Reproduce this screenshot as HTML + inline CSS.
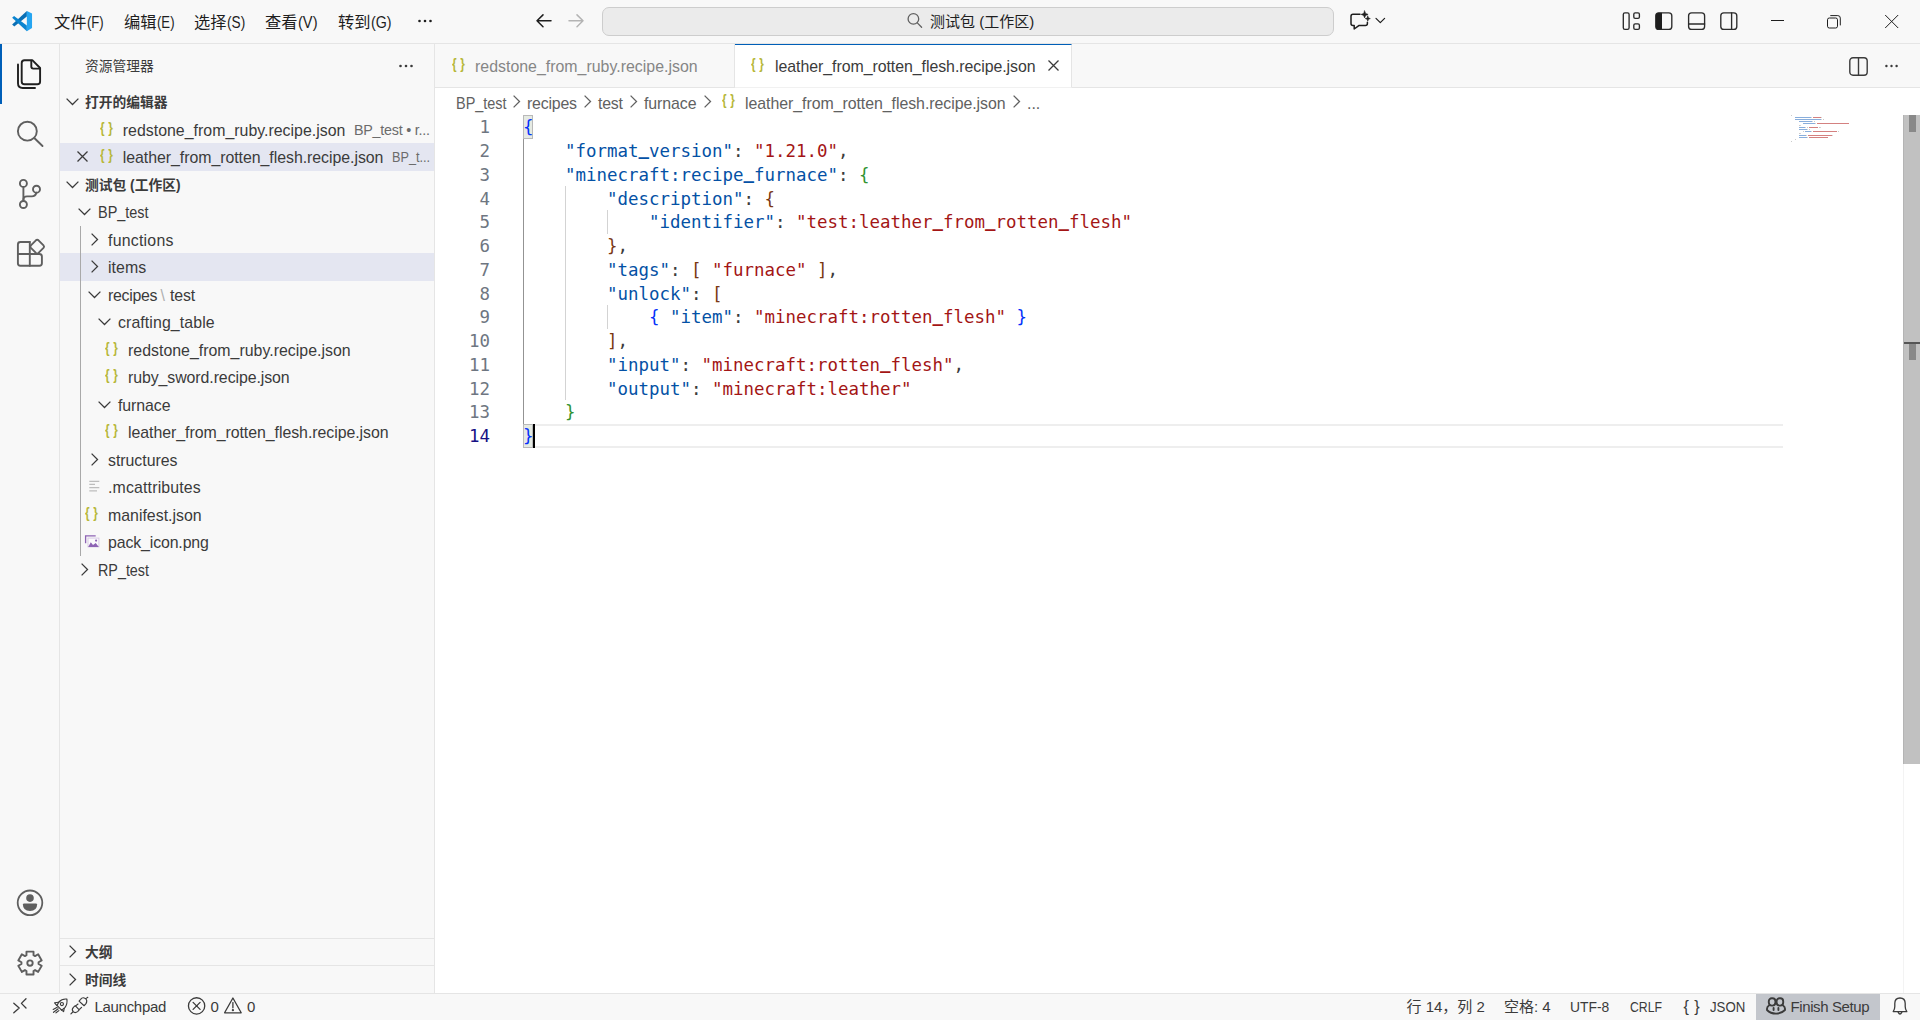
<!DOCTYPE html>
<html lang="zh-CN"><head>
<meta charset="utf-8">
<title>leather_from_rotten_flesh.recipe.json - 测试包 (工作区)</title>
<style>
*{box-sizing:border-box;margin:0;padding:0}
html,body{width:1920px;height:1020px;overflow:hidden;background:#f8f8f8}
body{position:relative;font-family:"Liberation Sans","Noto Sans CJK SC",sans-serif;font-size:16px;color:#3b3b3b;-webkit-font-smoothing:antialiased}
.abs{position:absolute}
svg{position:absolute;overflow:visible}
.t{position:absolute;white-space:nowrap;line-height:1}
/* title bar */
#titlebar{position:absolute;left:0;top:0;width:1920px;height:44px;background:#f8f8f8;border-bottom:1px solid #e5e5e5}
.menu{position:absolute;top:0.5px;height:43px;line-height:43px;font-size:16.25px;color:#1e1e1e;white-space:nowrap}
.ml{font-size:16.6px}
#cc{position:absolute;left:602px;top:7px;width:732px;height:29px;border:1px solid #cdcdcd;border-radius:7px;background:#ebebeb}
/* activity bar */
#activity{position:absolute;left:0;top:44px;width:60px;height:950px;background:#f8f8f8;border-right:1px solid #e5e5e5}
/* sidebar */
#sidebar{position:absolute;left:60px;top:44px;width:375px;height:950px;background:#f8f8f8;border-right:1px solid #e5e5e5}
.row{position:absolute;left:0;width:374px;height:27.5px}
.row.sel{background:#e4e6f1;margin-top:0.3px}
.lbl{position:absolute;white-space:nowrap;font-size:15.9px;line-height:27.5px;top:0;margin-top:1.7px;color:#3b3b3b}
.hdr{font-weight:bold;font-size:13.75px;color:#3b3b3b;margin-top:0.9px}
.desc{font-size:14.3px;color:#6b6b6b}
.jsi{position:absolute;font-family:"Liberation Sans",sans-serif;font-weight:bold;font-size:14.8px;line-height:27.5px;height:27.5px;color:#b7b73b;letter-spacing:4.4px;white-space:nowrap;transform:scaleX(0.8);transform-origin:0 50%;margin:-0.7px 0 0 -0.7px}
.bs{color:#b0b0b0;margin:0 3px}
/* editor */
#editor{position:absolute;left:435px;top:44px;width:1485px;height:950px;background:#fff}
#tabs{position:absolute;left:0;top:0;width:1485px;height:44px;background:#f8f8f8;border-bottom:1px solid #e5e5e5}
.tab{position:absolute;top:0;height:44px;border-right:1px solid #e5e5e5}
#bc{position:absolute;left:0;top:44px;width:1468px;height:27px;background:#fff}
.bcl{color:#616161;top:0}
.bcs{top:7.3px;margin-left:-0.6px;width:7.5px;height:13px}
.bcs path{fill:none;stroke:#616161;stroke-width:1.3}
.code{margin-top:1.3px;position:absolute;left:88px;white-space:pre;font-family:"DejaVu Sans Mono","Liberation Mono",monospace;font-size:17.44px;line-height:23.7px;height:23.7px;color:#3b3b3b}
.ln{margin-top:1.3px;position:absolute;left:0;width:55px;text-align:right;font-family:"DejaVu Sans Mono","Liberation Mono",monospace;font-size:17.44px;line-height:23.7px;height:23.7px;color:#6e7681}
.u{position:relative;top:-1.9px;font-weight:bold}
.k{color:#0451a5}.s{color:#a31515}.b1{color:#0431fa}.b2{color:#319331}.b3{color:#7b3814}
.ln.cur{color:#171184}
#mm i{position:absolute;height:1px;display:block}
/* status bar */
#status{position:absolute;left:0;top:993px;width:1920px;height:27px;background:#f8f8f8;border-top:1px solid #e5e5e5;font-size:15px;color:#3b3b3b}
.st{position:absolute;top:0;line-height:26px;white-space:nowrap}
</style>
</head>
<body>

<!-- ================= TITLE BAR ================= -->
<div id="titlebar">
  <svg style="left:11.9px;top:10.9px" width="20.1" height="20.2" viewBox="0 0 100 101">
    <path d="M74 0 L74 27 L11 77 L0.5 67.5 Z" fill="#0a6fb5"></path>
    <path d="M10 25 L74 72 L74 101 L0.5 33.5 Z" fill="#0a84d0"></path>
    <path d="M74 0 L100 12.5 V85.5 L74 101 Z" fill="#25a5f1"></path>
  </svg>
  <div class="menu" style="left:54px">文件<span class="ml" style="display: inline-block; transform: scaleX(0.79); transform-origin: 0px 50%; margin-right: -4.45px;">(F)</span></div>
  <div class="menu" style="left:124px">编辑<span class="ml" style="display: inline-block; transform: scaleX(0.791); transform-origin: 0px 50%; margin-right: -4.63px;">(E)</span></div>
  <div class="menu" style="left:194px">选择<span class="ml" style="display: inline-block; transform: scaleX(0.8226); transform-origin: 0px 50%; margin-right: -3.93px;">(S)</span></div>
  <div class="menu" style="left:265px">查看<span class="ml" style="display: inline-block; transform: scaleX(0.8814); transform-origin: 0px 50%; margin-right: -2.63px;">(V)</span></div>
  <div class="menu" style="left:338px">转到<span class="ml" style="display: inline-block; transform: scaleX(0.8553); transform-origin: 0px 50%; margin-right: -3.47px;">(G)</span></div>
  <svg style="left:418.3px;top:18.6px" width="14" height="4" viewBox="0 0 14 4"><circle cx="1.5" cy="2" r="1.3" fill="#1e1e1e"></circle><circle cx="7" cy="2" r="1.3" fill="#1e1e1e"></circle><circle cx="12.5" cy="2" r="1.3" fill="#1e1e1e"></circle></svg>
  <div id="cc"></div>
  <svg style="left:0;top:0" width="1920" height="43" viewBox="0 0 1920 43" fill="none" stroke-linecap="round" stroke-linejoin="round">
    <!-- nav arrows -->
    <g stroke="#1e1e1e" stroke-width="1.5"><path d="M551 20.8 H537 M543 14.9 L537 20.8 L543 26.8"></path></g>
    <g stroke="#b4b4b4" stroke-width="1.5"><path d="M569 20.8 H583 M577 14.9 L583 20.8 L577 26.8"></path></g>
    <!-- search icon in command center -->
    <g stroke="#616161" stroke-width="1.3"><circle cx="913.4" cy="18.9" r="5.3"></circle><path d="M917.3 22.9 L921.6 27.2"></path></g>
    <!-- chat sparkle -->
    <g stroke="#1e1e1e" stroke-width="1.5"><path d="M1360 14.2 H1353 Q1351 14.2 1351 16.2 V23.6 Q1351 25.6 1353 25.6 H1354.2 V29 L1358.8 25.6 H1365.4 Q1367.4 25.6 1367.4 23.6 V22.3"></path></g>
    <path d="M1364.6 10.9 L1365.6 13.4 L1368.1 14.4 L1365.6 15.4 L1364.6 17.9 L1363.6 15.4 L1361.1 14.4 L1363.6 13.4Z M1367.8 16.1 L1368.5 17.9 L1370.3 18.6 L1368.5 19.3 L1367.8 21.1 L1367.1 19.3 L1365.3 18.6 L1367.1 17.9Z" fill="#1e1e1e" stroke="#1e1e1e" stroke-width="0.6"></path>
    <g stroke="#1e1e1e" stroke-width="1.2"><path d="M1376 18.4 L1380.3 22.6 L1384.6 18.4"></path></g>
    <!-- layout controls -->
    <g stroke="#2b2b2b" stroke-width="1.35">
      <rect x="1623.3" y="12.8" width="5.8" height="16.6" rx="1.6"></rect>
      <rect x="1633.8" y="12.8" width="5.6" height="5.6" rx="1.4"></rect>
      <rect x="1633.8" y="23.8" width="5.6" height="5.6" rx="1.4"></rect>
      <rect x="1655.8" y="12.8" width="16" height="16.6" rx="3"></rect>
      <rect x="1688.6" y="12.8" width="16" height="16.6" rx="3"></rect>
      <path d="M1688.6 24 H1704.6"></path>
      <rect x="1720.8" y="12.8" width="16" height="16.6" rx="3"></rect>
      <path d="M1731.6 12.8 V29.4"></path>
    </g>
    <path d="M1658.8 12.8 H1662 V29.4 H1658.8 Q1655.8 29.4 1655.8 26.4 V15.8 Q1655.8 12.8 1658.8 12.8Z" fill="#1e1e1e"></path>
    <!-- window controls -->
    <g stroke="#1e1e1e" stroke-width="1.0" stroke-linecap="butt">
      <path d="M1771 20.5 H1784"></path>
      <rect x="1827.5" y="18" width="10" height="10" rx="1.8"></rect>
      <path d="M1830.3 15.6 H1837.8 Q1840.3 15.6 1840.3 18.1 V25.4"></path>
      <path d="M1885.2 15 L1898.2 28 M1898.2 15 L1885.2 28"></path>
    </g>
  </svg>
  <div class="t" style="left:930px;top:14px;font-size:15px;color:#1e1e1e">测试包 (工作区)</div>
</div>

<!-- ================= ACTIVITY BAR ================= -->
<div id="activity">
  <div class="abs" style="left:0;top:0;width:2px;height:60px;background:#005fb8"></div>
  <svg style="left:0;top:0" width="60" height="950" viewBox="0 44 60 950" fill="none" stroke-linecap="round" stroke-linejoin="round">
    <!-- files -->
    <g stroke="#1f1f1f" stroke-width="1.9">
      <path d="M24.5 60.2 H32.3 L40.1 68 V81.4 Q40.1 84.2 37.3 84.2 H24.5 Q21.7 84.2 21.7 81.4 V63 Q21.7 60.2 24.5 60.2Z"></path>
      <path d="M31.3 60.6 V66.6 Q31.3 68.6 33.3 68.6 H39.6"></path>
      <path d="M18 64.5 V83.3 Q18 88 22.7 88 H35"></path>
    </g>
    <!-- search -->
    <g stroke="#5f5f5f" stroke-width="1.9">
      <circle cx="27.35" cy="131.2" r="9.45"></circle>
      <path d="M34.3 138 L42.5 146"></path>
    </g>
    <!-- source control -->
    <g stroke="#5f5f5f" stroke-width="1.9">
      <circle cx="23.4" cy="183.4" r="3.5"></circle>
      <circle cx="36.5" cy="189.2" r="3.5"></circle>
      <circle cx="23.4" cy="204.5" r="3.5"></circle>
      <path d="M23.4 187 V201"></path>
      <path d="M36.3 192.8 Q35.6 196.4 31.8 196.4 H27 Q23.4 196.4 23.4 199.8"></path>
    </g>
    <!-- extensions -->
    <g stroke="#5f5f5f" stroke-width="1.9">
      <path d="M29.8 242 H20.4 Q17.9 242 17.9 244.5 V263.3 Q17.9 265.8 20.4 265.8 H39.4 Q41.9 265.8 41.9 263.3 V256.5 Q41.9 254 39.4 254 H17.9"></path>
      <path d="M29.8 242 V265.8"></path>
      <path d="M30.9 247.9 Q29.7 246.6 30.9 245.3 L35.9 240.3 Q37.2 239.1 38.5 240.3 L43.5 245.3 Q44.7 246.6 43.5 247.9 L38.5 252.9 Q37.2 254.1 35.9 252.9 Z"></path>
    </g>
    <!-- account -->
    <g stroke="#5f5f5f" stroke-width="1.8">
      <circle cx="30" cy="902.8" r="12.3"></circle>
    </g>
    <circle cx="30" cy="898.1" r="3.8" fill="#5f5f5f"></circle>
    <path d="M22.9 904.6 Q22.9 903.4 24.1 903.4 H35.9 Q37.1 903.4 37.1 904.6 Q37.1 911 30 911 Q22.9 911 22.9 904.6Z" fill="#5f5f5f"></path>
    <!-- gear -->
    <g stroke="#5f5f5f" stroke-width="1.9">
      <path d="M26.49 955.25 L26.45 951.64 L33.55 951.64 L33.51 955.25 L35.05 956.14 L38.16 954.30 L41.70 960.44 L38.55 962.21 L38.55 963.99 L41.70 965.76 L38.16 971.90 L35.05 970.06 L33.51 970.95 L33.55 974.56 L26.45 974.56 L26.49 970.95 L24.95 970.06 L21.84 971.90 L18.30 965.76 L21.45 963.99 L21.45 962.21 L18.30 960.44 L21.84 954.30 L24.95 956.14Z"></path>
      <circle cx="30" cy="963.1" r="2.7"></circle>
    </g>
  </svg>
</div>

<!-- ================= SIDEBAR ================= -->
<div id="sidebar">
  <div class="t" style="left:25px;top:16px;font-size:13.75px;color:#3b3b3b">资源管理器</div>
  <svg style="left:339px;top:20px" width="14" height="4" viewBox="0 0 14 4"><circle cx="1.5" cy="2" r="1.3" fill="#3b3b3b"></circle><circle cx="7" cy="2" r="1.3" fill="#3b3b3b"></circle><circle cx="12.5" cy="2" r="1.3" fill="#3b3b3b"></circle></svg>
  <svg style="left:6.00px;top:54.45px" width="13" height="7.5" viewBox="0 0 13 7.5"><path d="M0.6 0.6 L6.5 6.5 L12.4 0.6" fill="none" stroke="#3b3b3b" stroke-width="1.3"></path></svg>
  <div class="lbl hdr" style="left:25px;top:43.75px">打开的编辑器</div>
  <div class="row" style="top:71.25px"></div>
  <div class="jsi" style="left:40.50px;top:71.25px">{}</div>
  <div class="lbl" style="left: 62.8px; top: 71.25px; letter-spacing: 0.01px;">redstone_from_ruby.recipe.json</div>
  <div class="lbl desc" style="left: 294px; top: 71.25px; letter-spacing: -0.224px;">BP_test • r...</div>
  <div class="row sel" style="top:98.75px"></div>
  <svg style="left:17px;top:107px" width="11" height="11" viewBox="0 0 11 11"><path d="M0.5 0.5 L10.5 10.5 M10.5 0.5 L0.5 10.5" fill="none" stroke="#3b3b3b" stroke-width="1.3"></path></svg>
  <div class="jsi" style="left:40.50px;top:98.75px">{}</div>
  <div class="lbl" style="left: 62.8px; top: 98.75px; letter-spacing: -0.048px;">leather_from_rotten_flesh.recipe.json</div>
  <div class="lbl desc" style="left: 332px; top: 98.75px; transform: scaleX(0.8853); transform-origin: 0px 50%;">BP_t...</div>
  <svg style="left:6.00px;top:136.95px" width="13" height="7.5" viewBox="0 0 13 7.5"><path d="M0.6 0.6 L6.5 6.5 L12.4 0.6" fill="none" stroke="#3b3b3b" stroke-width="1.3"></path></svg>
  <div class="lbl hdr" style="left:25px;top:127.05px">测试包 (工作区)</div>
  <svg style="left:17.50px;top:164.45px" width="13" height="7.5" viewBox="0 0 13 7.5"><path d="M0.6 0.6 L6.5 6.5 L12.4 0.6" fill="none" stroke="#3b3b3b" stroke-width="1.3"></path></svg>
  <div class="lbl" style="left: 38px; top: 153.75px; transform: scaleX(0.9092); transform-origin: 0px 50%;">BP_test</div>
  <svg style="left:30.65px;top:188.50px" width="7.5" height="13" viewBox="0 0 7.5 13"><path d="M0.6 0.6 L6.5 6.5 L0.6 12.4" fill="none" stroke="#3b3b3b" stroke-width="1.3"></path></svg>
  <div class="lbl" style="left: 48px; top: 181.25px; letter-spacing: 0.224px;">functions</div>
  <div class="row sel" style="top:208.75px"></div>
  <svg style="left:30.65px;top:216.00px" width="7.5" height="13" viewBox="0 0 7.5 13"><path d="M0.6 0.6 L6.5 6.5 L0.6 12.4" fill="none" stroke="#3b3b3b" stroke-width="1.3"></path></svg>
  <div class="lbl" style="left: 48px; top: 208.75px; letter-spacing: 0.083px;">items</div>
  <svg style="left:27.50px;top:246.95px" width="13" height="7.5" viewBox="0 0 13 7.5"><path d="M0.6 0.6 L6.5 6.5 L12.4 0.6" fill="none" stroke="#3b3b3b" stroke-width="1.3"></path></svg>
  <div class="lbl" style="left: 48px; top: 236.25px; letter-spacing: -0.306px;">recipes</div><div class="lbl" style="left:100.6px;top:236.25px;color:#b0b0b0">\</div><div class="lbl" style="left: 110.1px; top: 236.25px; letter-spacing: -0.142px;">test</div>
  <svg style="left:37.50px;top:274.45px" width="13" height="7.5" viewBox="0 0 13 7.5"><path d="M0.6 0.6 L6.5 6.5 L12.4 0.6" fill="none" stroke="#3b3b3b" stroke-width="1.3"></path></svg>
  <div class="lbl" style="left: 58px; top: 263.75px; letter-spacing: 0.092px;">crafting_table</div>
  <div class="jsi" style="left:45.50px;top:291.25px">{}</div>
  <div class="lbl" style="left: 68px; top: 291.25px; letter-spacing: 0.01px;">redstone_from_ruby.recipe.json</div>
  <div class="jsi" style="left:45.50px;top:318.75px">{}</div>
  <div class="lbl" style="left: 68px; top: 318.75px; letter-spacing: -0.081px;">ruby_sword.recipe.json</div>
  <svg style="left:37.50px;top:356.95px" width="13" height="7.5" viewBox="0 0 13 7.5"><path d="M0.6 0.6 L6.5 6.5 L12.4 0.6" fill="none" stroke="#3b3b3b" stroke-width="1.3"></path></svg>
  <div class="lbl" style="left: 58px; top: 346.25px; letter-spacing: -0.069px;">furnace</div>
  <div class="jsi" style="left:45.50px;top:373.75px">{}</div>
  <div class="lbl" style="left: 68px; top: 373.75px; letter-spacing: -0.048px;">leather_from_rotten_flesh.recipe.json</div>
  <svg style="left:30.65px;top:408.50px" width="7.5" height="13" viewBox="0 0 7.5 13"><path d="M0.6 0.6 L6.5 6.5 L0.6 12.4" fill="none" stroke="#3b3b3b" stroke-width="1.3"></path></svg>
  <div class="lbl" style="left: 48px; top: 401.25px; letter-spacing: -0.03px;">structures</div>
  <svg style="left:0;top:0" width="374" height="950" viewBox="0 0 374 950" fill="none"><path d="M29.299999999999997 437.3H39.3 M29.299999999999997 440.4H35 M29.299999999999997 443.6H39.3 M29.299999999999997 446.8H37" stroke="#bdbdbd" stroke-width="1.3"></path></svg>
  <div class="lbl" style="left: 48px; top: 428.75px; letter-spacing: 0.153px;">.mcattributes</div>
  <div class="jsi" style="left:25.50px;top:456.25px">{}</div>
  <div class="lbl" style="left: 48px; top: 456.25px; letter-spacing: -0.002px;">manifest.json</div>
  <svg style="left:0;top:0" width="374" height="950" viewBox="0 0 374 950" fill="none">
    <path d="M35.7 491.79999999999995 H25.599999999999994 V499.20000000000005" stroke="#8d63b4" stroke-width="1.3"></path>
    <rect x="28" y="494.1" width="10.9" height="8.8" stroke="#d5c7e3" stroke-width="0.9" fill="#fbfafc"></rect>
    <path d="M28.200000000000003 502.9 L30.799999999999997 498.20000000000005 L33 501 L35.7 499 L38.8 502.9Z" fill="#8d63b4"></path>
    <circle cx="36.099999999999994" cy="496.6" r="1.1" fill="#8d63b4"></circle>
  </svg>
  <div class="lbl" style="left: 48px; top: 483.75px; letter-spacing: -0.132px;">pack_icon.png</div>
  <svg style="left:20.65px;top:518.50px" width="7.5" height="13" viewBox="0 0 7.5 13"><path d="M0.6 0.6 L6.5 6.5 L0.6 12.4" fill="none" stroke="#3b3b3b" stroke-width="1.3"></path></svg>
  <div class="lbl" style="left: 38px; top: 511.25px; transform: scaleX(0.9022); transform-origin: 0px 50%;">RP_test</div>
  <div class="abs" style="left:20px;top:181.5px;width:1px;height:330px;background:#a9a9a9"></div>
  <div class="abs" style="left:0;top:894px;width:374px;height:1px;background:#e5e5e5"></div>
  <svg style="left:8.75px;top:901.00px" width="7.5" height="13" viewBox="0 0 7.5 13"><path d="M0.6 0.6 L6.5 6.5 L0.6 12.4" fill="none" stroke="#3b3b3b" stroke-width="1.3"></path></svg>
  <div class="lbl hdr" style="left:25px;top:894.5px">大纲</div>
  <div class="abs" style="left:0;top:921px;width:374px;height:1px;background:#e5e5e5"></div>
  <svg style="left:8.75px;top:928.50px" width="7.5" height="13" viewBox="0 0 7.5 13"><path d="M0.6 0.6 L6.5 6.5 L0.6 12.4" fill="none" stroke="#3b3b3b" stroke-width="1.3"></path></svg>
  <div class="lbl hdr" style="left:25px;top:922px">时间线</div>
</div>

<!-- ================= EDITOR ================= -->
<div id="editor">
  <div id="tabs">
    <div class="tab" style="left:0;width:300px"></div>
    <div class="jsi" style="left:17.5px;top:8px">{}</div>
    <div class="lbl" style="left: 40px; top: 7.4px; color: rgb(134, 134, 134); letter-spacing: 0.01px;">redstone_from_ruby.recipe.json</div>
    <div class="tab" style="left:300px;width:337px;background:#fff;height:44px;border-top:1.5px solid #005fb8;border-bottom:1px solid #f1f1f1"></div>
    <div class="jsi" style="left:317px;top:8px">{}</div>
    <div class="lbl" style="left: 340px; top: 7.4px; color: rgb(59, 59, 59); letter-spacing: -0.048px;">leather_from_rotten_flesh.recipe.json</div>
    <svg style="left:612.9px;top:15.9px" width="11" height="11" viewBox="0 0 11 11"><path d="M0.5 0.5 L10.5 10.5 M10.5 0.5 L0.5 10.5" fill="none" stroke="#3b3b3b" stroke-width="1.3"></path></svg>
    <!-- split editor + more -->
    <svg style="left:1414px;top:12.5px" width="19" height="19" viewBox="0 0 19 19"><rect x="0.8" y="0.8" width="17.4" height="17.4" rx="3.2" fill="none" stroke="#3b3b3b" stroke-width="1.4"></rect><path d="M9.5 1V18" stroke="#3b3b3b" stroke-width="1.4"></path></svg>
    <svg style="left:1450px;top:20px" width="13" height="4" viewBox="0 0 13 4"><circle cx="1.4" cy="2" r="1.2" fill="#3b3b3b"></circle><circle cx="6.5" cy="2" r="1.2" fill="#3b3b3b"></circle><circle cx="11.6" cy="2" r="1.2" fill="#3b3b3b"></circle></svg>
  </div>
  <!-- breadcrumbs -->
  <div id="bc">
    <div class="lbl bcl" style="left: 20.5px; transform: scaleX(0.9092); transform-origin: 0px 50%;">BP_test</div>
    <svg class="bcs" style="left:78.5px"><path d="M0.6 0.6 L6.5 6.5 L0.6 12.4"></path></svg>
    <div class="lbl bcl" style="left: 92px; letter-spacing: -0.206px;">recipes</div>
    <svg class="bcs" style="left:149.5px"><path d="M0.6 0.6 L6.5 6.5 L0.6 12.4"></path></svg>
    <div class="lbl bcl" style="left: 163px; letter-spacing: -0.208px;">test</div>
    <svg class="bcs" style="left:195.5px"><path d="M0.6 0.6 L6.5 6.5 L0.6 12.4"></path></svg>
    <div class="lbl bcl" style="left: 209px; letter-spacing: -0.069px;">furnace</div>
    <svg class="bcs" style="left:269.5px"><path d="M0.6 0.6 L6.5 6.5 L0.6 12.4"></path></svg>
    <div class="jsi" style="left:287.5px;top:0px">{}</div>
    <div class="lbl bcl" style="left: 310px; letter-spacing: -0.048px;">leather_from_rotten_flesh.recipe.json</div>
    <svg class="bcs" style="left:579px"><path d="M0.6 0.6 L6.5 6.5 L0.6 12.4"></path></svg>
    <div class="lbl bcl" style="left:592px">...</div>
  </div>
  <!-- code -->
  <div class="abs" style="left:89px;top:380.05px;width:1259px;height:2px;background:#eeeeee"></div>
  <div class="abs" style="left:89px;top:401.70px;width:1259px;height:2px;background:#eeeeee"></div>
  <div class="abs" style="left:88px;top:71.20px;width:9.8px;height:23.75px;background:#e5eae3;border:1px solid #b9b9b9"></div>
  <div class="abs" style="left:88px;top:379.95px;width:9.8px;height:23.75px;background:#e5eae3;border:1px solid #b9b9b9"></div>
  <div class="abs" style="left:88px;top:94.95px;width:1px;height:285.00px;background:#939393"></div>
  <div class="abs" style="left:130px;top:142.45px;width:1px;height:213.75px;background:#d3d3d3"></div>
  <div class="abs" style="left:172px;top:166.20px;width:1px;height:23.75px;background:#d3d3d3"></div>
  <div class="abs" style="left:172px;top:261.20px;width:1px;height:23.75px;background:#d3d3d3"></div>
  <div class="ln" style="top:71.20px">1</div>
  <div class="code" style="top:71.20px"><span class="b1">{</span></div>
  <div class="ln" style="top:94.95px">2</div>
  <div class="code" style="top:94.95px">    <span class="k">"format<b class="u">_</b>version"</span>: <span class="s">"1.21.0"</span>,</div>
  <div class="ln" style="top:118.70px">3</div>
  <div class="code" style="top:118.70px">    <span class="k">"minecraft:recipe<b class="u">_</b>furnace"</span>: <span class="b2">{</span></div>
  <div class="ln" style="top:142.45px">4</div>
  <div class="code" style="top:142.45px">        <span class="k">"description"</span>: <span class="b3">{</span></div>
  <div class="ln" style="top:166.20px">5</div>
  <div class="code" style="top:166.20px">            <span class="k">"identifier"</span>: <span class="s">"test:leather<b class="u">_</b>from<b class="u">_</b>rotten<b class="u">_</b>flesh"</span></div>
  <div class="ln" style="top:189.95px">6</div>
  <div class="code" style="top:189.95px">        <span class="b3">}</span>,</div>
  <div class="ln" style="top:213.70px">7</div>
  <div class="code" style="top:213.70px">        <span class="k">"tags"</span>: <span class="b3">[</span> <span class="s">"furnace"</span> <span class="b3">]</span>,</div>
  <div class="ln" style="top:237.45px">8</div>
  <div class="code" style="top:237.45px">        <span class="k">"unlock"</span>: <span class="b3">[</span></div>
  <div class="ln" style="top:261.20px">9</div>
  <div class="code" style="top:261.20px">            <span class="b1">{</span> <span class="k">"item"</span>: <span class="s">"minecraft:rotten<b class="u">_</b>flesh"</span> <span class="b1">}</span></div>
  <div class="ln" style="top:284.95px">10</div>
  <div class="code" style="top:284.95px">        <span class="b3">]</span>,</div>
  <div class="ln" style="top:308.70px">11</div>
  <div class="code" style="top:308.70px">        <span class="k">"input"</span>: <span class="s">"minecraft:rotten<b class="u">_</b>flesh"</span>,</div>
  <div class="ln" style="top:332.45px">12</div>
  <div class="code" style="top:332.45px">        <span class="k">"output"</span>: <span class="s">"minecraft:leather"</span></div>
  <div class="ln" style="top:356.20px">13</div>
  <div class="code" style="top:356.20px">    <span class="b2">}</span></div>
  <div class="ln cur" style="top:379.95px">14</div>
  <div class="code" style="top:379.95px"><span class="b1">}</span></div>
  <div class="abs" style="left:98px;top:379.95px;width:2px;height:23.75px;background:#000"></div>
  <div id="mm"><i style="left:1356.00px;top:71.40px;width:1.00px;background:#7c7c7c;opacity:0.4"></i><i style="left:1360.00px;top:73.40px;width:16.00px;background:#5b8fcf;opacity:0.72"></i><i style="left:1376.00px;top:73.40px;width:1.00px;background:#9a9a9a;opacity:0.4"></i><i style="left:1378.00px;top:73.40px;width:8.00px;background:#c4514f;opacity:0.72"></i><i style="left:1386.00px;top:73.40px;width:1.00px;background:#9a9a9a;opacity:0.4"></i><i style="left:1360.00px;top:75.40px;width:26.00px;background:#5b8fcf;opacity:0.72"></i><i style="left:1386.00px;top:75.40px;width:1.00px;background:#9a9a9a;opacity:0.4"></i><i style="left:1388.00px;top:75.40px;width:1.00px;background:#7c7c7c;opacity:0.4"></i><i style="left:1364.00px;top:77.40px;width:13.00px;background:#5b8fcf;opacity:0.72"></i><i style="left:1377.00px;top:77.40px;width:1.00px;background:#9a9a9a;opacity:0.4"></i><i style="left:1379.00px;top:77.40px;width:1.00px;background:#7c7c7c;opacity:0.4"></i><i style="left:1368.00px;top:79.40px;width:12.00px;background:#5b8fcf;opacity:0.72"></i><i style="left:1380.00px;top:79.40px;width:1.00px;background:#9a9a9a;opacity:0.4"></i><i style="left:1382.00px;top:79.40px;width:32.00px;background:#c4514f;opacity:0.72"></i><i style="left:1364.00px;top:81.40px;width:1.00px;background:#7c7c7c;opacity:0.4"></i><i style="left:1365.00px;top:81.40px;width:1.00px;background:#9a9a9a;opacity:0.4"></i><i style="left:1364.00px;top:83.40px;width:6.00px;background:#5b8fcf;opacity:0.72"></i><i style="left:1370.00px;top:83.40px;width:1.00px;background:#9a9a9a;opacity:0.4"></i><i style="left:1372.00px;top:83.40px;width:1.00px;background:#7c7c7c;opacity:0.4"></i><i style="left:1374.00px;top:83.40px;width:9.00px;background:#c4514f;opacity:0.72"></i><i style="left:1384.00px;top:83.40px;width:1.00px;background:#7c7c7c;opacity:0.4"></i><i style="left:1385.00px;top:83.40px;width:1.00px;background:#9a9a9a;opacity:0.4"></i><i style="left:1364.00px;top:85.40px;width:8.00px;background:#5b8fcf;opacity:0.72"></i><i style="left:1372.00px;top:85.40px;width:1.00px;background:#9a9a9a;opacity:0.4"></i><i style="left:1374.00px;top:85.40px;width:1.00px;background:#7c7c7c;opacity:0.4"></i><i style="left:1368.00px;top:87.40px;width:1.00px;background:#7c7c7c;opacity:0.4"></i><i style="left:1370.00px;top:87.40px;width:6.00px;background:#5b8fcf;opacity:0.72"></i><i style="left:1376.00px;top:87.40px;width:1.00px;background:#9a9a9a;opacity:0.4"></i><i style="left:1378.00px;top:87.40px;width:24.00px;background:#c4514f;opacity:0.72"></i><i style="left:1403.00px;top:87.40px;width:1.00px;background:#7c7c7c;opacity:0.4"></i><i style="left:1364.00px;top:89.40px;width:1.00px;background:#7c7c7c;opacity:0.4"></i><i style="left:1365.00px;top:89.40px;width:1.00px;background:#9a9a9a;opacity:0.4"></i><i style="left:1364.00px;top:91.40px;width:7.00px;background:#5b8fcf;opacity:0.72"></i><i style="left:1371.00px;top:91.40px;width:1.00px;background:#9a9a9a;opacity:0.4"></i><i style="left:1373.00px;top:91.40px;width:24.00px;background:#c4514f;opacity:0.72"></i><i style="left:1397.00px;top:91.40px;width:1.00px;background:#9a9a9a;opacity:0.4"></i><i style="left:1364.00px;top:93.40px;width:8.00px;background:#5b8fcf;opacity:0.72"></i><i style="left:1372.00px;top:93.40px;width:1.00px;background:#9a9a9a;opacity:0.4"></i><i style="left:1374.00px;top:93.40px;width:19.00px;background:#c4514f;opacity:0.72"></i><i style="left:1360.00px;top:95.40px;width:1.00px;background:#7c7c7c;opacity:0.4"></i><i style="left:1356.00px;top:97.40px;width:1.00px;background:#7c7c7c;opacity:0.4"></i></div>
  <div class="abs" style="left:1468px;top:71.2px;width:17px;height:649px;background:#c1c1c1"></div>
  <div class="abs" style="left:1468px;top:71.2px;width:1px;height:649px;background:#b4b4b4"></div>
  <div class="abs" style="left:1474px;top:71.2px;width:7px;height:16.5px;background:#898989"></div>
  <div class="abs" style="left:1469px;top:298px;width:16px;height:2px;background:#555555"></div>
  <div class="abs" style="left:1474px;top:300px;width:7px;height:16px;background:#898989"></div>
  <div class="abs" style="left:1468px;top:720px;width:1px;height:230px;background:#f3f3f3"></div>
</div>

<!-- ================= STATUS BAR ================= -->
<div id="status">
  <svg style="left:0;top:0" width="1920" height="26" viewBox="0 994 1920 26" fill="none" stroke="#3b3b3b" stroke-width="1.3" stroke-linecap="round" stroke-linejoin="round">
    <!-- remote -->
    <path d="M13.8 1003.2 L19.2 1008 L13.8 1012.8 M26 998.8 L21.4 1003.4 L26 1008"></path>
    <!-- rocket -->
    <g stroke-width="1.15">
    <path d="M66.9 999.1 Q62 998.6 58.9 1002 L57 1005.4 L61.6 1010.1 L64.9 1007.6 Q67.6 1004 66.9 999.1 Z"></path>
    <path d="M58.8 1002.2 L54.6 1002.8 L56.7 1005.3 M64.3 1008.2 L63.6 1011.6 L61.3 1009.9"></path>
    <circle cx="61.9" cy="1004" r="1.55"></circle>
    <path d="M57.2 1007.2 L53.2 1009.4 M58.2 1008.8 L53.5 1012.3 M58.9 1010.6 L56 1012.8"></path>
    <!-- plug -->
    <path d="M79.06 1001.06 L84.06 1005.75 L86 1003.6 Q87.8 1000.3 85.3 998.4 Q82.4 996.8 80.6 999.3 Z M85.9 998.6 L87.8 997.3"></path>
    <path d="M75.2 1005.6 L79.2 1009.9 L77.6 1011.6 Q75 1013.5 73.2 1011.6 Q71.3 1009.6 73.4 1007.3 Z M72.8 1012 L70.9 1013.9 M76.3 1005.4 L78 1004 M79.8 1009 L81.6 1007.3"></path>
    </g>
    <!-- error -->
    <circle cx="196.6" cy="1005.9" r="8.15"></circle>
    <path d="M193.1 1002.4 L200.1 1009.4 M200.1 1002.4 L193.1 1009.4"></path>
    <!-- warning -->
    <path d="M232.9 998 L241.2 1012.8 H224.6 Z"></path>
    <path d="M232.9 1002.6 V1007.8"></path>
    <circle cx="232.9" cy="1010.2" r="0.5"></circle>
    <!-- bell -->
    <path d="M1893.2 1011.6 Q1894.8 1009.4 1894.8 1006.6 V1003.6 Q1894.8 998 1900 998 Q1905.2 998 1905.2 1003.6 V1006.6 Q1905.2 1009.4 1906.8 1011.6 Z M1898.2 1012.4 Q1900 1015.6 1901.8 1012.4"></path>
  </svg>
  <div class="st" style="left: 94.5px; letter-spacing: -0.306px;">Launchpad</div>
  <div class="st" style="left:210.5px">0</div>
  <div class="st" style="left:247px">0</div>
  <div class="st" style="left:1406.5px">行 14，列 2</div>
  <div class="st" style="left:1504px">空格: 4</div>
  <div class="st" style="left: 1570px; transform: scaleX(0.9247); transform-origin: 0px 50%;">UTF-8</div>
  <div class="st" style="left: 1630px; transform: scaleX(0.8169); transform-origin: 0px 50%;">CRLF</div>
  <div class="st" style="left:1683.6px;letter-spacing:5.2px;font-size:16.2px;top:-1px">{}</div>
  <div class="st" style="left: 1710px; transform: scaleX(0.8822); transform-origin: 0px 50%;">JSON</div>
  <div class="abs" style="left:1756px;top:0;width:124px;height:26px;background:#c3c6cc"></div>
  <svg style="left:1766px;top:3px" width="20" height="18" viewBox="0 0 20 18" fill="none" stroke="#3b3b3b" stroke-width="1.9" stroke-linejoin="round" stroke-linecap="round">
    <path d="M3.2 8.2 Q1 9.6 1 11.8 V13 Q4.5 16.6 10 16.6 Q15.5 16.6 19 13 V11.8 Q19 9.6 16.8 8.2"></path>
    <rect x="2.8" y="1.2" width="6.6" height="7.4" rx="3"></rect>
    <rect x="10.6" y="1.2" width="6.6" height="7.4" rx="3"></rect>
    <path d="M7.6 11 V13 M12.4 11 V13"></path>
  </svg>
  <div class="st" style="left: 1790.5px; letter-spacing: -0.399px;">Finish Setup</div>
</div>



</body></html>
